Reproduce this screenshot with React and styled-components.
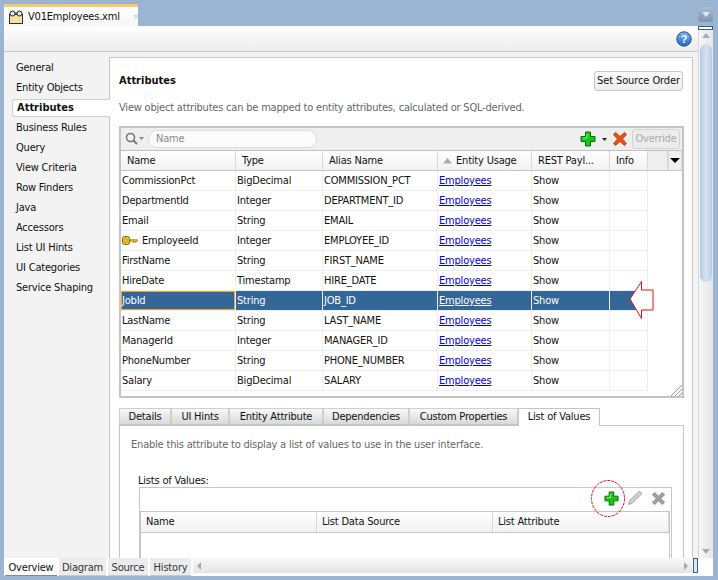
import React from 'react'
import styled, { createGlobalStyle } from 'styled-components'

const GlobalStyle = createGlobalStyle`
  html, body {
    margin: 0;
    padding: 0;
    background: #9ab4d1;
  }
  * {
    box-sizing: border-box;
  }
`

const Page = styled.div`
  position: relative;
  width: 718px;
  height: 580px;
  overflow: hidden;
  padding: 4px 0 4px 4px;
  display: flex;
  flex-direction: column;
  background: #9ab4d1;
  font-family: "DejaVu Sans Condensed", "Liberation Sans", sans-serif;
  font-size: 11px;
  letter-spacing: -0.2px;
  color: #111;
`

const EditorTabs = styled.div`
  height: 22px;
  display: flex;
`

const EditorTab = styled.div`
  width: 134px;
  border-top: 3px solid #f5c872;
  background: linear-gradient(#ffffff, #f6f6f6);
  display: flex;
  align-items: center;
  padding: 0 0 0 4px;
  gap: 4px;
  font-size: 11px;
  svg {
    flex-shrink: 0;
  }
  span:last-child {
    margin-left: 9px;
    color: #ccc;
    font-size: 9px;
  }
`

const Workspace = styled.div`
  flex: 1;
  display: flex;
  min-height: 0;
`

const Editor = styled.div`
  width: 694px;
  flex-shrink: 0;
  display: flex;
  flex-direction: column;
  background: #f3f3f3;
`

const TopBar = styled.div`
  height: 26px;
  display: flex;
  justify-content: flex-end;
  align-items: flex-start;
  background: linear-gradient(#ffffff, #ececec);
  border-bottom: 1px solid #c8c8c8;
  svg {
    margin-top: 5px;
    margin-right: 6px;
  }
`

const Body = styled.div`
  flex: 1;
  min-height: 0;
  display: flex;
  padding-top: 5px;
`

const Sidebar = styled.div`
  width: 105px;
  flex-shrink: 0;
  padding-top: 1px;
`

const NavItem = styled.div`
  height: ${p => (p.$active ? '18px' : '20px')};
  line-height: ${p => (p.$active ? '16px' : '20px')};
  padding-left: ${p => (p.$active ? '4px' : '12px')};
  margin: ${p => (p.$active ? '1px -1px 1px 8px' : '0')};
  font-weight: ${p => (p.$active ? 700 : 400)};
  letter-spacing: ${p => (p.$active ? '0' : '-0.2px')};
  position: relative;
  z-index: 1;
  background: ${p => (p.$active ? '#fff' : 'transparent')};
  border: ${p => (p.$active ? '1px solid #d0d0d0' : 'none')};
  border-right: none;
  border-radius: 3px 0 0 3px;
`

const Main = styled.div`
  width: 584px;
  flex-shrink: 0;
  background: #fff;
  border: 1px solid #c8c8c8;
  border-bottom: none;
  padding: 0 9px;
  overflow: hidden;
`

const TitleRow = styled.div`
  display: flex;
  justify-content: space-between;
  align-items: flex-start;
  height: 41px;
  padding-top: 13px;
`

const Title = styled.div`
  font-weight: 700;
  letter-spacing: 0;
  padding-top: 3px;
`

const SourceButton = styled.div`
  width: 89px;
  height: 20px;
  border: 1px solid #c4c4c4;
  border-radius: 3px;
  background: linear-gradient(#fafafa, #eeeeee);
  text-align: center;
  line-height: 18px;
  white-space: nowrap;
  letter-spacing: -0.1px;
`

const Hint = styled.div`
  color: #666;
  height: 27px;
  line-height: 18px;
  padding-left: ${p => (p.$inset ? '11px' : '0')};
`

const AttributeBox = styled.div`
  position: relative;
  width: 565px;
  height: 272px;
  border: 2px solid #c4c4c4;
  display: flex;
  flex-direction: column;
`

const SearchBar = styled.div`
  height: 23px;
  background: #efefef;
  border-bottom: 1px solid #c0c0c0;
  display: flex;
  align-items: center;
  padding-left: 3px;
`

const SearchField = styled.div`
  width: 169px;
  height: 18px;
  margin-left: 3px;
  border: 1px solid #dcdcdc;
  border-radius: 9px;
  background: #fbfbfb;
  padding-left: 7px;
  line-height: 15px;
  color: #888;
`

const SearchTools = styled.div`
  margin-left: auto;
  display: flex;
  align-items: center;
  padding-right: 2px;
`

const OverrideButton = styled.div`
  width: 48px;
  height: 20px;
  margin-left: 4px;
  border: 1px solid #d4d4d4;
  border-radius: 3px;
  background: #ececec;
  color: #aaa;
  text-align: center;
  line-height: 18px;
`

const Row = styled.div`
  display: grid;
  grid-template-columns: ${p => p.$cols};
  height: ${p => p.$h || 20}px;
`

const HeadCell = styled.div`
  height: 100%;
  padding-left: ${p => p.$pad || 6}px;
  line-height: 20px;
  background: linear-gradient(#ffffff, #f1f1f1);
  border-right: 1px solid #d8d8d8;
  border-bottom: 1px solid #c4c4c4;
  white-space: nowrap;
  overflow: hidden;
  display: flex;
  align-items: center;
  gap: 4px;
`

const MenuCell = styled(HeadCell)`
  justify-content: center;
  padding-left: 0;
  border-left: 1px solid #d8d8d8;
  background: #f2f2f2;
  &::before {
    content: "";
    border: 5px solid transparent;
    border-top: 5px solid #000;
    border-bottom: none;
  }
`

const EmptyHead = styled(HeadCell)`
  background: #eeeeee;
`

const Grid = styled.div`
  flex: 1;
  min-height: 0;
`

const Cell = styled.div`
  padding-left: 1px;
  line-height: 19px;
  white-space: nowrap;
  overflow: hidden;
  border-right: 1px solid #eeeeee;
  border-bottom: 1px solid #eeeeee;
  color: ${p => (p.$selected ? '#fff' : '#111')};
  background: ${p => (p.$selected ? '#336699' : '#fff')};
  display: flex;
  align-items: center;
  gap: 4px;
  ${p => p.$focus && 'box-shadow: inset 0 0 0 1px #f5a623;'}
`

const RowLink = styled.a`
  color: ${p => (p.$selected ? '#fff' : '#0000e0')};
  text-decoration: underline;
`

const Grip = styled.svg`
  position: absolute;
  right: 0;
  bottom: 0;
`

const DetailTabs = styled.div`
  display: flex;
  margin-top: 10px;
  height: 18px;
  position: relative;
  z-index: 1;
`

const DetailTab = styled.div`
  width: ${p => p.$w}px;
  height: ${p => (p.$active ? 18 : 17)}px;
  text-align: center;
  line-height: 15px;
  white-space: nowrap;
  background: ${p => (p.$active ? '#fff' : 'linear-gradient(#f8f8f8, #d9d9d9)')};
  border: 1px solid ${p => (p.$active ? '#c4c4c4' : '#cfcfcf')};
  border-bottom: ${p => (p.$active ? 'none' : '1px solid #c4c4c4')};
`

const DetailPanel = styled.div`
  width: 565px;
  height: 160px;
  margin-top: -1px;
  border: 1px solid #c4c4c4;
  padding-top: 10px;
`

const ListLabel = styled.div`
  margin: 12px 0 0 18px;
  height: 12px;
  line-height: 12px;
`

const ListBox = styled.div`
  margin-left: 19px;
  width: 533px;
  height: 80px;
  border: 1px solid #c8c8c8;
  border-bottom: none;
`

const ListTools = styled.div`
  height: 23px;
  padding: 0 5px 3px 0;
  display: flex;
  justify-content: flex-end;
  align-items: center;
  gap: 8px;
`

const ListTable = styled.div`
  border: 1px solid #c4c4c4;
  border-bottom: none;
  margin-right: 1px;
  height: 58px;
`

const BottomBar = styled.div`
  height: 18px;
  flex-shrink: 0;
  display: flex;
  background: #fff;
`

const ViewTab = styled.div`
  width: ${p => p.$w}px;
  margin-left: ${p => p.$gap}px;
  height: 18px;
  text-align: center;
  line-height: 19px;
  background: ${p => (p.$active ? '#fff' : '#ececec')};
  color: ${p => (p.$active ? '#111' : '#333')};
  border-bottom: 1px solid ${p => (p.$active ? '#888' : '#c8c8c8')};
`

const HScroll = styled.div`
  flex: 1;
  margin: 0 1px 0 2px;
  height: 15px;
  background: linear-gradient(#f8f8f8, #e4e4e4);
  display: flex;
  align-items: center;
  justify-content: space-between;
  padding: 0 4px;
  &::before, &::after {
    content: "";
    border: 4px solid transparent;
  }
  &::before {
    border-right: 4px solid #aaa;
    border-left: none;
  }
  &::after {
    border-left: 4px solid #aaa;
    border-right: none;
  }
`

const HHandle = styled.div`
  width: 5px;
  height: 15px;
  background: #dfe8f2;
  border: 1px solid #2f5f90;
`

const RightRail = styled.div`
  width: 15px;
  flex-shrink: 0;
  margin-top: -19px;
  display: flex;
  flex-direction: column;
`

const RailButton = styled.div`
  height: 15px;
  flex-shrink: 0;
  border-radius: 3px;
  background: linear-gradient(#a9bdd4, #7f96b0);
  display: flex;
  align-items: center;
  justify-content: center;
  &::before {
    content: "";
    border: 4px solid transparent;
    border-top: 5px solid #dfe6ee;
    border-bottom: none;
  }
`

const RailSplit = styled.div`
  height: 4px;
  flex-shrink: 0;
  margin-top: 4px;
  background: #fff;
  border: 1px solid #2f5f90;
`

const VScroll = styled.div`
  flex: 1;
  min-height: 0;
  background: linear-gradient(90deg, #f6f6f6, #e6e6e6);
  border-left: 1px solid #d8d8d8;
  display: flex;
  flex-direction: column;
  align-items: center;
  padding: 3px 0 4px;
`

const ScrollArrow = styled.div`
  border: 4px solid transparent;
  ${p => (p.$down
    ? 'border-top: 5px solid #aaa; border-bottom: none; margin-top: auto;'
    : 'border-bottom: 5px solid #aaa; border-top: none;')}
`

const VThumb = styled.div`
  width: 12px;
  height: 238px;
  margin-top: 6px;
  border-radius: 6px;
  background: linear-gradient(90deg, #b4cae2, #d6e3f1 50%, #b8cde4);
`

const RailCorner = styled.div`
  height: 18px;
  flex-shrink: 0;
  background: #fff;
`

const Callout = styled.svg`
  position: absolute;
  pointer-events: none;
  z-index: 5;
  left: ${p => p.$x}px;
  top: ${p => p.$y}px;
`

const PlusIcon = ({ size = 16 }) => (
  <svg width={size} height={size} viewBox="0 0 16 16">
    <path d="M5.5 1h5v4.5H15v5h-4.5V15h-5v-4.500H1v-5h4.500z" fill="#14c814" stroke="#0a6a0a" strokeWidth="1" strokeLinejoin="round" />
    <path d="M7 3v4H3" fill="none" stroke="#90f290" strokeWidth="1" />
  </svg>
)

const RedX = () => (
  <svg width="16" height="16" viewBox="0 0 16 16">
    <path d="M1.5 3.500 3.500 1.500 8 5.500 12.500 1.500 14.500 3.500 10.500 8l4 4.500-2 2L8 10.500l-4.500 4-2-2 4-4.500z" fill="#f2500f" stroke="#a82c08" strokeWidth="0.8" strokeLinejoin="round" />
  </svg>
)

const GrayX = () => (
  <svg width="15" height="15" viewBox="0 0 16 16">
    <path d="M1.5 4 4 1.500l4 4 4-4L14.500 4l-4 4 4 4-2.500 2.500-4-4-4 4L1.500 12l4-4z" fill="#a0a0a0" stroke="#777" strokeWidth="0.7" />
  </svg>
)

const Pencil = () => (
  <svg width="16" height="16" viewBox="0 0 16 16">
    <path d="M1.500 14.500 2.500 10.500 12.500 1 15 3.500 5.500 13z" fill="#d0d0d0" stroke="#999" strokeWidth="0.8" />
  </svg>
)

const KeyIcon = () => (
  <svg width="16" height="10" viewBox="0 0 16 10">
    <rect x="0.5" y="0.5" width="7" height="8" rx="2" fill="#e8c020" stroke="#8a6a10" />
    <rect x="3" y="3" width="2" height="3" fill="#fff2a0" stroke="#8a6a10" strokeWidth="0.5" />
    <path d="M8 3.500h7.500v2H14v1h-1v-1h-1v1h-1v-1H8z" fill="#d8b020" stroke="#8a6a10" strokeWidth="0.4" />
  </svg>
)

const FileIcon = () => (
  <svg width="16" height="16" viewBox="0 0 16 16">
    <rect x="1.5" y="5.500" width="13" height="9" fill="#f3e3a0" stroke="#333" />
    <circle cx="4.500" cy="4.500" r="2.500" fill="#dde8ee" stroke="#222" />
    <circle cx="11.500" cy="4.500" r="2.500" fill="#dde8ee" stroke="#222" />
    <path d="M7 4h2" stroke="#222" />
  </svg>
)

const SearchIcon = () => (
  <svg width="21" height="16" viewBox="0 0 21 16">
    <circle cx="6.5" cy="6.500" r="4" fill="#f4f4f4" stroke="#777" strokeWidth="1.6" />
    <path d="M9.500 9.500 13 13" stroke="#777" strokeWidth="2" />
    <path d="M15 6h5l-2.500 3z" fill="#888" />
  </svg>
)

const HelpIcon = () => (
  <svg width="16" height="16" viewBox="0 0 16 16">
    <defs>
      <linearGradient id="helpFill" x1="0" y1="0" x2="0" y2="1">
        <stop offset="0" stopColor="#7fb6ee" />
        <stop offset="1" stopColor="#1f68c8" />
      </linearGradient>
    </defs>
    <circle cx="8" cy="8" r="7.2" fill="url(#helpFill)" stroke="#1d4f9a" />
    <text x="8" y="12" textAnchor="middle" fontFamily="Liberation Sans, sans-serif" fontWeight="700" fontSize="11" fill="#fff">?</text>
  </svg>
)

const navItems = ['General', 'Entity Objects', 'Attributes', 'Business Rules', 'Query', 'View Criteria', 'Row Finders', 'Java', 'Accessors', 'List UI Hints', 'UI Categories', 'Service Shaping']

const attrCols = '115px 87px 115px 94px 78px 38px 20px 14px'

const attributes = [
  ['CommissionPct', 'BigDecimal', 'COMMISSION_PCT'],
  ['DepartmentId', 'Integer', 'DEPARTMENT_ID'],
  ['Email', 'String', 'EMAIL'],
  ['EmployeeId', 'Integer', 'EMPLOYEE_ID'],
  ['FirstName', 'String', 'FIRST_NAME'],
  ['HireDate', 'Timestamp', 'HIRE_DATE'],
  ['JobId', 'String', 'JOB_ID'],
  ['LastName', 'String', 'LAST_NAME'],
  ['ManagerId', 'Integer', 'MANAGER_ID'],
  ['PhoneNumber', 'String', 'PHONE_NUMBER'],
  ['Salary', 'BigDecimal', 'SALARY'],
]

const detailTabs = [
  ['Details', 52], ['UI Hints', 58], ['Entity Attribute', 94], ['Dependencies', 86], ['Custom Properties', 109], ['List of Values', 82, true],
]

export default function App() {
  return (
    <Page>
      <GlobalStyle />
      <EditorTabs>
        <EditorTab>
          <FileIcon />
          <span>V01Employees.xml</span>
          <span>✕</span>
        </EditorTab>
      </EditorTabs>
      <Workspace>
        <Editor>
          <TopBar><HelpIcon /></TopBar>
          <Body>
            <Sidebar>
              {navItems.map(n => <NavItem key={n} $active={n === 'Attributes'}>{n}</NavItem>)}
            </Sidebar>
            <Main>
              <TitleRow>
                <Title>Attributes</Title>
                <SourceButton>Set Source Order</SourceButton>
              </TitleRow>
              <Hint>View object attributes can be mapped to entity attributes, calculated or SQL-derived.</Hint>
              <AttributeBox>
                <SearchBar>
                  <SearchIcon />
                  <SearchField>Name</SearchField>
                  <SearchTools>
                    <PlusIcon />
                    <svg width="16" height="16" viewBox="0 0 16 16"><path d="M6 7h5l-2.500 3z" fill="#222" /></svg>
                    <RedX />
                    <OverrideButton>Override</OverrideButton>
                  </SearchTools>
                </SearchBar>
                <Row $cols={attrCols}>
                  <HeadCell>Name</HeadCell>
                  <HeadCell>Type</HeadCell>
                  <HeadCell>Alias Name</HeadCell>
                  <HeadCell $pad={5}>
                    <svg width="9" height="6" viewBox="0 0 9 6"><path d="M0 5.500 4.500 0 9 5.500z" fill="#aaa" /></svg>
                    Entity Usage
                  </HeadCell>
                  <HeadCell>REST Payl...</HeadCell>
                  <HeadCell>Info</HeadCell>
                  <EmptyHead />
                  <MenuCell />
                </Row>
                <Grid>
                  {attributes.map(([name, type, alias]) => {
                    const selected = name === 'JobId'
                    return (
                      <Row key={name} $cols={attrCols}>
                        <Cell $selected={selected} $focus={selected}>
                          {name === 'EmployeeId' && <KeyIcon />}
                          {name}
                        </Cell>
                        <Cell $selected={selected}>{type}</Cell>
                        <Cell $selected={selected}>{alias}</Cell>
                        <Cell $selected={selected}><RowLink href="#" $selected={selected}>Employees</RowLink></Cell>
                        <Cell $selected={selected}>Show</Cell>
                        <Cell $selected={selected} />
                      </Row>
                    )
                  })}
                </Grid>
                <Grip width="11" height="11" viewBox="0 0 11 11">
                  <path d="M0 11 11 0M4 11l7-7M8 11l3-3" stroke="#999" />
                </Grip>
              </AttributeBox>
              <DetailTabs>
                {detailTabs.map(([label, w, active]) => (
                  <DetailTab key={label} $w={w} $active={active}>{label}</DetailTab>
                ))}
              </DetailTabs>
              <DetailPanel>
                <Hint $inset>Enable this attribute to display a list of values to use in the user interface.</Hint>
                <ListLabel>Lists of Values:</ListLabel>
                <ListBox>
                  <ListTools>
                    <PlusIcon size={15} />
                    <Pencil />
                    <GrayX />
                  </ListTools>
                  <ListTable>
                    <Row $cols="176px 176px 1fr" $h={21}>
                      <HeadCell $pad={5}>Name</HeadCell>
                      <HeadCell $pad={5}>List Data Source</HeadCell>
                      <HeadCell $pad={5}>List Attribute</HeadCell>
                    </Row>
                  </ListTable>
                </ListBox>
              </DetailPanel>
            </Main>
          </Body>
          <BottomBar>
            <ViewTab $w={52} $gap={1} $active>Overview</ViewTab>
            <ViewTab $w={47} $gap={2}>Diagram</ViewTab>
            <ViewTab $w={40} $gap={2}>Source</ViewTab>
            <ViewTab $w={41} $gap={2}>History</ViewTab>
            <HScroll />
            <HHandle />
          </BottomBar>
        </Editor>
        <RightRail>
          <RailButton />
          <RailSplit />
          <VScroll>
            <ScrollArrow />
            <VThumb />
            <ScrollArrow $down />
          </VScroll>
          <RailCorner />
        </RightRail>
      </Workspace>
      <Callout $x={628} $y={279} width="28" height="42" viewBox="0 0 28 42">
        <path d="M2 20 13.500 2.500V11H25V31H13.500V39.500Z" fill="#fff" stroke="#e81010" />
      </Callout>
      <Callout $x={590} $y={479} width="36" height="39" viewBox="0 0 36 39">
        <ellipse cx="18" cy="19.500" rx="16.500" ry="18" fill="none" stroke="#e81010" strokeDasharray="3 1" />
      </Callout>
    </Page>
  )
}
